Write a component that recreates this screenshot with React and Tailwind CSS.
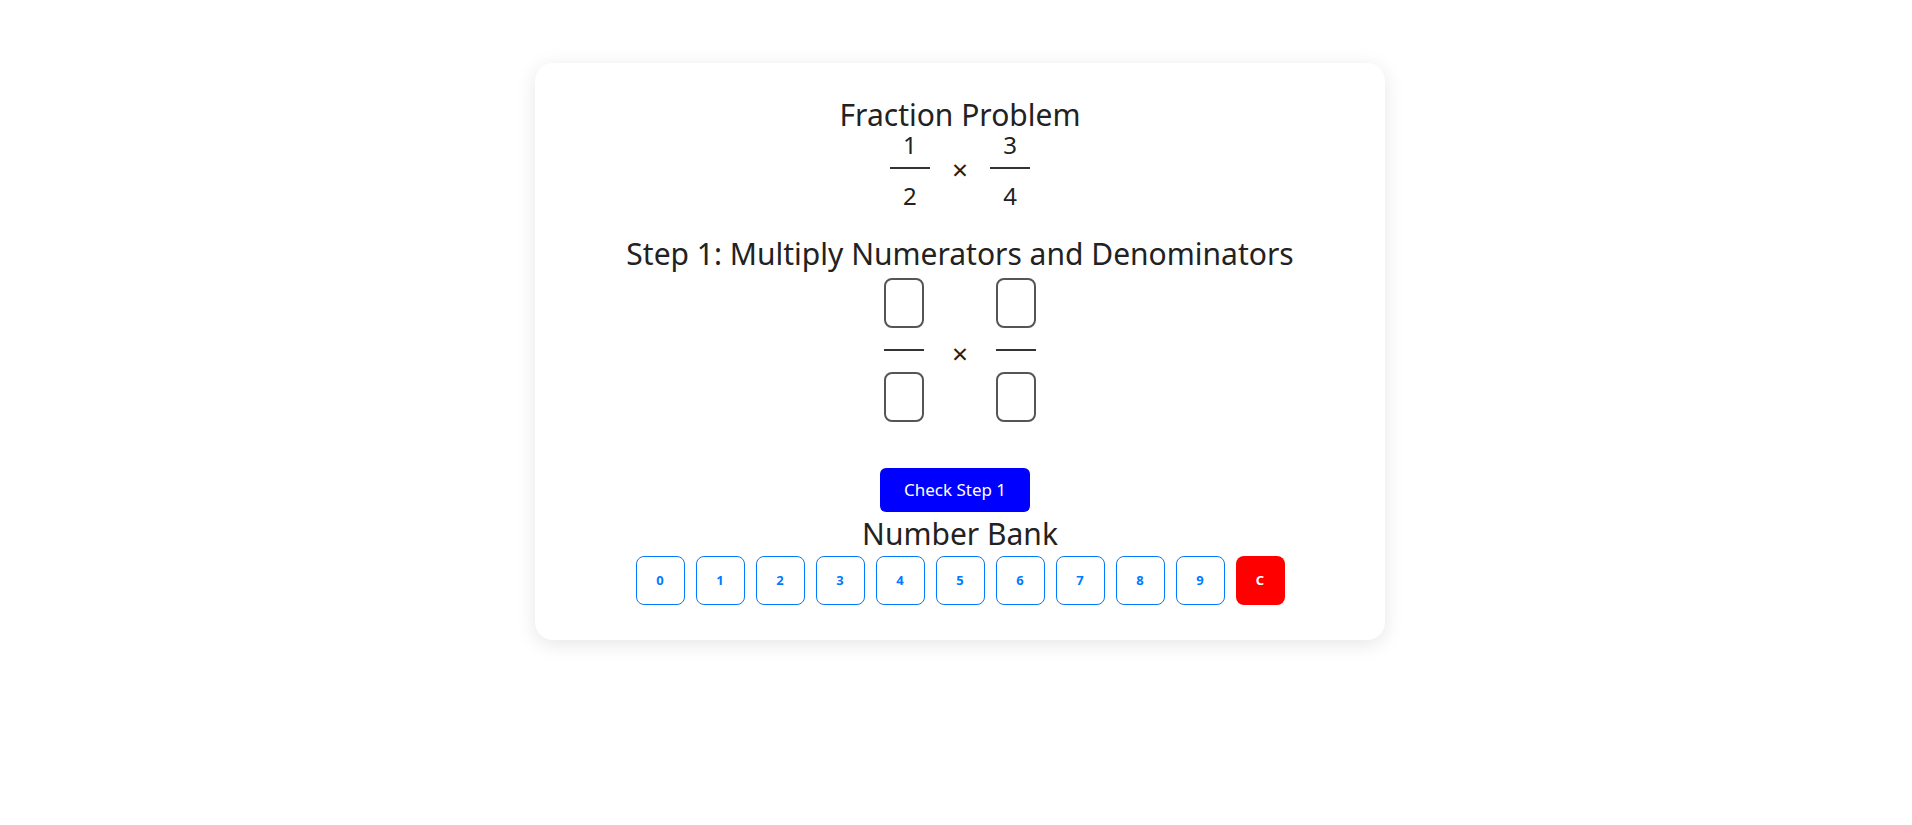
const Fraction = ({ top, bottom }) => (
  <div className="flex flex-col items-center w-[40px]">
    <div className="mt-[3px] h-[22px] leading-[22px] text-[24px]">{top}</div>
    <div className="mt-[11px] w-[40px] h-[2px] bg-[#333]" />
    <div className="mt-[16px] h-[22px] leading-[22px] text-[24px]">{bottom}</div>
  </div>
);

const BoxFraction = () => (
  <div className="flex flex-col items-center w-[40px]">
    <input className="w-[40px] h-[50px] border-2 border-[#555] rounded-[8px] text-center text-[20px] outline-none" />
    <div className="mt-[21px] w-[40px] h-[2px] bg-[#333]" />
    <input className="mt-[21px] w-[40px] h-[50px] border-2 border-[#555] rounded-[8px] text-center text-[20px] outline-none" />
  </div>
);

export default function App() {
  const digits = ["0", "1", "2", "3", "4", "5", "6", "7", "8", "9"];

  return (
    <div className="min-h-screen bg-white pt-[63px] pl-[8px] font-['Noto_Sans',sans-serif] text-[#222]">
      <div className="w-[850px] mx-auto bg-white rounded-[18px] shadow-[0_4px_20px_rgba(0,0,0,0.1)] pt-[37px] pb-[35px] flex flex-col items-center">
        <h2 className="text-[30px] leading-[30px]">Fraction Problem</h2>

        <div className="mt-[1px] flex items-center">
          <Fraction top="1" bottom="2" />
          <span className="mx-[22px] text-[28px] leading-[28px]">×</span>
          <Fraction top="3" bottom="4" />
        </div>

        <h2 className="mt-[29px] text-[30px] leading-[36px]">Step 1: Multiply Numerators and Denominators</h2>

        <div className="mt-[6px] flex items-center">
          <BoxFraction />
          <span className="mx-[28px] mt-[6px] text-[28px] leading-[28px]">×</span>
          <BoxFraction />
        </div>

        <button className="mt-[46px] mr-[10px] w-[150px] h-[44px] bg-[#0000ff] text-white text-[17px] rounded-[6px]">
          Check Step 1
        </button>

        <h2 className="mt-[4px] text-[30px] leading-[36px]">Number Bank</h2>

        <div className="mt-[4px] flex gap-[11px]">
          {digits.map((d) => (
            <button
              key={d}
              className="w-[49px] h-[49px] border border-[#007bff] rounded-[8px] bg-white text-[#007bff] text-[13px] font-bold"
            >
              {d}
            </button>
          ))}
          <button className="w-[49px] h-[49px] rounded-[8px] bg-[#ff0000] text-white text-[13px] font-bold">
            C
          </button>
        </div>
      </div>
    </div>
  );
}
